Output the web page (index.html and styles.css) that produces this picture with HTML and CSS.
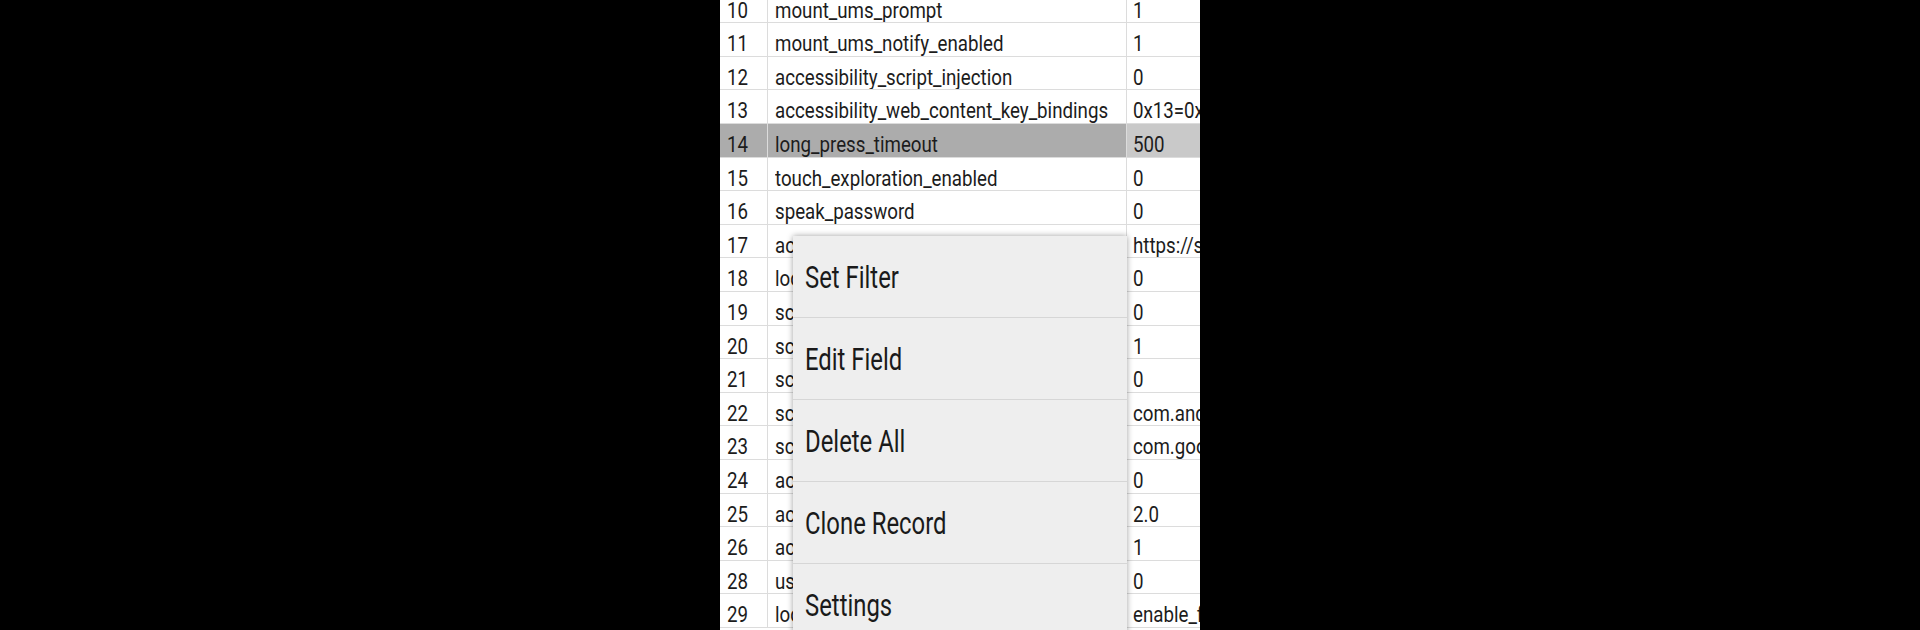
FILE: index.html
```html
<!DOCTYPE html>
<html>
<head>
<meta charset="utf-8">
<link rel="stylesheet" href="styles.css">
</head>
<body>
<div class="screen">
  <div class="table">
    <div class="row"><div class="num"><span>10</span></div><div class="key"><span>mount_ums_prompt</span></div><div class="val"><span>1</span></div></div>
    <div class="row"><div class="num"><span>11</span></div><div class="key"><span>mount_ums_notify_enabled</span></div><div class="val"><span>1</span></div></div>
    <div class="row"><div class="num"><span>12</span></div><div class="key"><span>accessibility_script_injection</span></div><div class="val"><span>0</span></div></div>
    <div class="row"><div class="num"><span>13</span></div><div class="key"><span>accessibility_web_content_key_bindings</span></div><div class="val"><span>0x13=0x100000013</span></div></div>
    <div class="row selected"><div class="num"><span>14</span></div><div class="key"><span>long_press_timeout</span></div><div class="val"><span>500</span></div></div>
    <div class="row"><div class="num"><span>15</span></div><div class="key"><span>touch_exploration_enabled</span></div><div class="val"><span>0</span></div></div>
    <div class="row"><div class="num"><span>16</span></div><div class="key"><span>speak_password</span></div><div class="val"><span>0</span></div></div>
    <div class="row"><div class="num"><span>17</span></div><div class="key"><span>accessibility_script_injection_url</span></div><div class="val"><span>https://ssl.gstatic.com</span></div></div>
    <div class="row"><div class="num"><span>18</span></div><div class="key"><span>lock_screen_owner_info_enabled</span></div><div class="val"><span>0</span></div></div>
    <div class="row"><div class="num"><span>19</span></div><div class="key"><span>screensaver_enabled</span></div><div class="val"><span>0</span></div></div>
    <div class="row"><div class="num"><span>20</span></div><div class="key"><span>screensaver_activate_on_dock</span></div><div class="val"><span>1</span></div></div>
    <div class="row"><div class="num"><span>21</span></div><div class="key"><span>screensaver_activate_on_sleep</span></div><div class="val"><span>0</span></div></div>
    <div class="row"><div class="num"><span>22</span></div><div class="key"><span>screensaver_components</span></div><div class="val"><span>com.android.deskclock</span></div></div>
    <div class="row"><div class="num"><span>23</span></div><div class="key"><span>screensaver_default_component</span></div><div class="val"><span>com.google.android</span></div></div>
    <div class="row"><div class="num"><span>24</span></div><div class="key"><span>accessibility_display_magnification_enabled</span></div><div class="val"><span>0</span></div></div>
    <div class="row"><div class="num"><span>25</span></div><div class="key"><span>accessibility_display_magnification_scale</span></div><div class="val"><span>2.0</span></div></div>
    <div class="row"><div class="num"><span>26</span></div><div class="key"><span>accessibility_display_magnification_auto_update</span></div><div class="val"><span>1</span></div></div>
    <div class="row"><div class="num"><span>28</span></div><div class="key"><span>user_setup_complete</span></div><div class="val"><span>0</span></div></div>
    <div class="row"><div class="num"><span>29</span></div><div class="key"><span>lock_screen_appwidget_ids</span></div><div class="val"><span>enable_facelock</span></div></div>
  </div>
  <div class="menu">
    <div class="item"><span>Set Filter</span></div>
    <div class="item"><span>Edit Field</span></div>
    <div class="item"><span>Delete All</span></div>
    <div class="item"><span>Clone Record</span></div>
    <div class="item"><span>Settings</span></div>
  </div>
</div>
</body>
</html>
```

FILE: styles.css
```css
html, body {
  margin: 0;
  padding: 0;
  background: #000;
  height: 630px;
  overflow: hidden;
}
.screen {
  position: relative;
  width: 480px;
  height: 630px;
  margin: 0 auto;
  background: #fff;
  overflow: hidden;
  font-family: Roboto, "Liberation Sans", sans-serif;
  color: #1c1c1c;
}
.table {
  margin-top: -10.3px;
}
.row {
  display: grid;
  grid-template-columns: 48px 359px 200px;
  height: 33.6px;
  box-sizing: border-box;
  border-bottom: 1px solid #dcdcdc;
  font-size: 21.5px;
  line-height: 41px;
  white-space: nowrap;
}
.row > div {
  overflow: hidden;
  box-sizing: border-box;
}
.row span {
  display: inline-block;
  transform: scaleX(0.87);
  transform-origin: 0 0;
}
.num {
  padding-left: 7px;
  border-right: 1px solid #dcdcdc;
}
.key {
  padding-left: 7px;
  border-right: 1px solid #dcdcdc;
}
.val {
  padding-left: 6px;
}
.selected .num,
.selected .key {
  background: #acacac;
}
.selected .val {
  background: #c9c9c9;
}
.menu {
  position: absolute;
  left: 73px;
  top: 236px;
  width: 334px;
  background: #eeeeee;
  box-shadow: 0 0 6px rgba(0, 0, 0, 0.38);
}
.item {
  height: 82px;
  box-sizing: border-box;
  border-bottom: 1px solid #d6d6d6;
  display: flex;
  align-items: center;
  padding-left: 12px;
  padding-top: 2px;
  font-size: 31px;
  color: #1a1a1a;
}
.item span {
  display: inline-block;
  transform: scaleX(0.77);
  transform-origin: 0 50%;
  white-space: nowrap;
}
```
